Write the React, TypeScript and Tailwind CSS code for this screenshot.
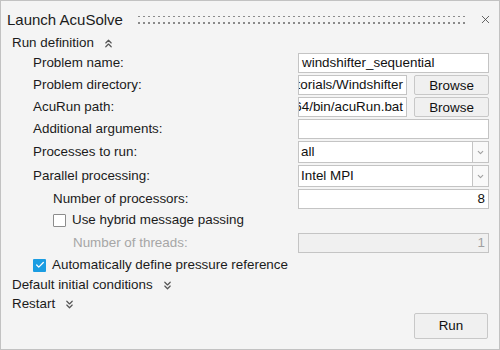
import { ChevronsUp, ChevronsDown, ChevronDown, X, Check } from 'lucide-react'
import type { ReactNode } from 'react'

const font = { fontFamily: '"Liberation Sans", Arial, sans-serif' }

function Grip() {
  return (
    <svg className="flex-1 h-[10px] ml-[15px] mr-[12px] mt-[1px]" aria-hidden>
      <defs>
        <pattern id="dots" width="5" height="7" patternUnits="userSpaceOnUse">
          <rect x="0" y="0" width="2" height="2" fill="#8a8a8a" />
        </pattern>
      </defs>
      <rect x="0" y="1" width="100%" height="9" fill="url(#dots)" />
    </svg>
  )
}

function Label({ children, indent = 32, muted = false }: { children: ReactNode; indent?: number; muted?: boolean }) {
  return (
    <div
      className={`flex-1 flex items-center text-[13.4px] ${muted ? 'text-[#a6a6a6]' : 'text-[#1b1b1b]'}`}
      style={{ paddingLeft: indent }}
    >
      {children}
    </div>
  )
}

function TextBox({ value, alignEnd = false, width = 'w-[191px]' }: { value: string; alignEnd?: boolean; width?: string }) {
  return (
    <div
      className={`${width} h-full bg-white border border-[#c4c4c4] flex items-center overflow-hidden px-[3px] text-[13.4px] text-[#111] whitespace-nowrap ${alignEnd ? 'justify-end' : ''}`}
    >
      <span className="shrink-0">{value}</span>
    </div>
  )
}

function BrowseBtn() {
  return (
    <button className="w-[75px] h-full ml-[7px] bg-[#f0f0f0] border border-[#c8c8c8] rounded-[2px] text-[13.4px] text-[#111]">
      Browse
    </button>
  )
}

function Combo({ value }: { value: string }) {
  return (
    <div className="w-[191px] h-full bg-white border border-[#c4c4c4] flex text-[13.4px] text-[#111]">
      <div className="flex-1 flex items-center px-[2px]">{value}</div>
      <div className="w-[16px] border-l border-[#c4c4c4] bg-[#f9f9f9] flex items-center justify-center">
        <ChevronDown size={9} strokeWidth={3} color="#a0a0a0" />
      </div>
    </div>
  )
}

function Section({ title, open }: { title: string; open: boolean }) {
  return (
    <div className="flex items-center gap-[8px] pl-[11px] text-[13.4px] text-[#1b1b1b]">
      <span>{title}</span>
      {open ? (
        <ChevronsUp size={13} strokeWidth={2.2} color="#555" />
      ) : (
        <ChevronsDown size={13} strokeWidth={2.2} color="#555" />
      )}
    </div>
  )
}

export default function App() {
  return (
    <div style={font} className="w-[500px] h-[350px] bg-[#f4f4f4] border border-[#c2c2c2] flex flex-col">
      <div className="h-[33px] flex items-center pl-[6px] pr-[7px] shrink-0 pt-[3px]">
        <span className="text-[15px] text-[#1b1b1b] pt-[2px]">Launch AcuSolve</span>
        <Grip />
        <X size={13} strokeWidth={1.5} color="#444" />
      </div>

      <div className="h-[18px] flex pt-[1px]">
        <Section title="Run definition" open />
      </div>

      <div className="flex flex-col pr-[10px] mt-[1px]">
        <div className="h-[20px] flex">
          <Label>Problem name:</Label>
          <TextBox value="windshifter_sequential" />
        </div>
        <div className="h-[20px] flex mt-[2px]">
          <Label>Problem directory:</Label>
          <TextBox value="Tutorials/Windshifter" alignEnd width="w-[109px]" />
          <BrowseBtn />
        </div>
        <div className="h-[20px] flex mt-[2px]">
          <Label>AcuRun path:</Label>
          <TextBox value="win64/bin/acuRun.bat" alignEnd width="w-[109px]" />
          <BrowseBtn />
        </div>
        <div className="h-[20px] flex mt-[2px]">
          <Label>Additional arguments:</Label>
          <TextBox value="" />
        </div>
        <div className="h-[22px] flex mt-[2px]">
          <Label>Processes to run:</Label>
          <Combo value="all" />
        </div>
        <div className="h-[22px] flex mt-[2px]">
          <Label>Parallel processing:</Label>
          <Combo value="Intel MPI" />
        </div>
        <div className="h-[20px] flex mt-[2px]">
          <Label indent={52}>Number of processors:</Label>
          <TextBox value="8" alignEnd />
        </div>
        <div className="h-[23px] flex items-center pl-[52px] gap-[6px] text-[13.4px] text-[#1b1b1b]">
          <span className="w-[13px] h-[13px] bg-white border border-[#8c8c8c] rounded-[1px]" />
          <span>Use hybrid message passing</span>
        </div>
        <div className="h-[20px] flex mt-[1px]">
          <Label indent={72} muted>Number of threads:</Label>
          <div className="w-[191px] h-full bg-[#f0f0f0] border border-[#c4c4c4] flex items-center justify-end px-[3px] text-[13.4px] text-[#a0a0a0]">
            1
          </div>
        </div>
        <div className="h-[20px] flex items-center pl-[32px] gap-[6px] mt-[2px] text-[13.4px] text-[#1b1b1b]">
          <span className="w-[13px] h-[13px] bg-[#1b9de2] rounded-[1px] flex items-center justify-center">
            <Check size={10} strokeWidth={3} color="#fff" />
          </span>
          <span>Automatically define pressure reference</span>
        </div>
      </div>

      <div className="h-[20px] flex pt-[1px]">
        <Section title="Default initial conditions" open={false} />
      </div>
      <div className="h-[18px] flex">
        <Section title="Restart" open={false} />
      </div>

      <div className="flex justify-end pr-[11px]">
        <button className="w-[74px] h-[26px] bg-[#f0f0f0] border border-[#c8c8c8] rounded-[2px] text-[13.4px] text-[#111]">
          Run
        </button>
      </div>
    </div>
  )
}
